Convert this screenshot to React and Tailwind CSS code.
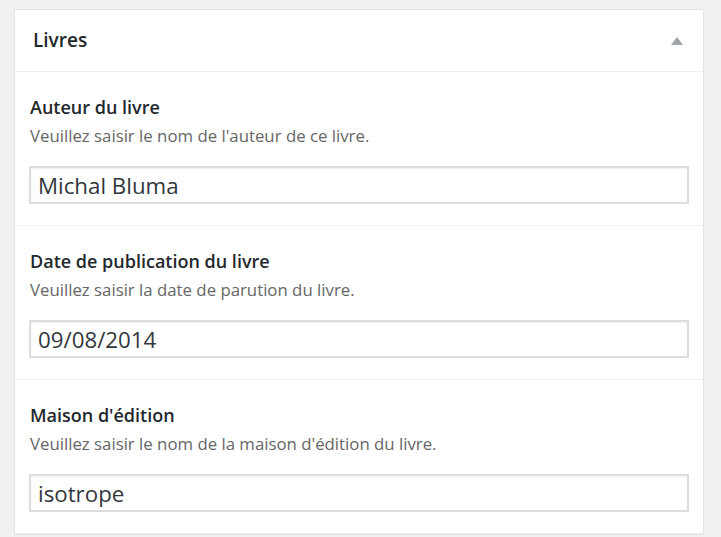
import React from "react";

const fields = [
  {
    label: "Auteur du livre",
    help: "Veuillez saisir le nom de l'auteur de ce livre.",
    value: "Michal Bluma",
  },
  {
    label: "Date de publication du livre",
    help: "Veuillez saisir la date de parution du livre.",
    value: "09/08/2014",
  },
  {
    label: "Maison d'édition",
    help: "Veuillez saisir le nom de la maison d'édition du livre.",
    value: "isotrope",
  },
];

function Field({ label, help, value }) {
  return (
    <div className="border-b border-[#eeeeee] px-[14px] pt-[24px] pb-[21px]">
      <p className="pl-px text-[18px] leading-[22px] font-semibold text-[#23282d]">{label}</p>
      <p className="mt-[8px] pl-px text-[16.8px] leading-[20px] text-[#666]">{help}</p>
      <input
        readOnly
        defaultValue={value}
        className="mt-[20px] block h-[38px] w-full border-2 border-[#dddddd] bg-white px-[7px] text-[22.3px] text-[#32373c] shadow-[inset_0_1px_2px_rgba(0,0,0,0.07)] outline-none"
      />
    </div>
  );
}

export default function App() {
  return (
    <div
      className="min-h-[537px] w-full overflow-hidden bg-[#f1f1f1] pt-[9px] pl-[14px]"
      style={{ fontFamily: '"Open Sans", "Noto Sans", sans-serif' }}
    >
      <div className="w-[690px] border border-[#e5e5e5] bg-white">
        {/* panel header */}
        <div className="flex h-[62px] items-center justify-between border-b border-[#eeeeee] pl-[18px] pr-[20px]">
          <h2 className="text-[19px] font-semibold text-[#23282d]">Livres</h2>
          <svg width="12" height="8" viewBox="0 0 12 8" className="mt-px">
            <path d="M6 0 L12 8 L0 8 Z" fill="#a0a5aa" />
          </svg>
        </div>
        {fields.map((f) => (
          <Field key={f.label} {...f} />
        ))}
      </div>
    </div>
  );
}
